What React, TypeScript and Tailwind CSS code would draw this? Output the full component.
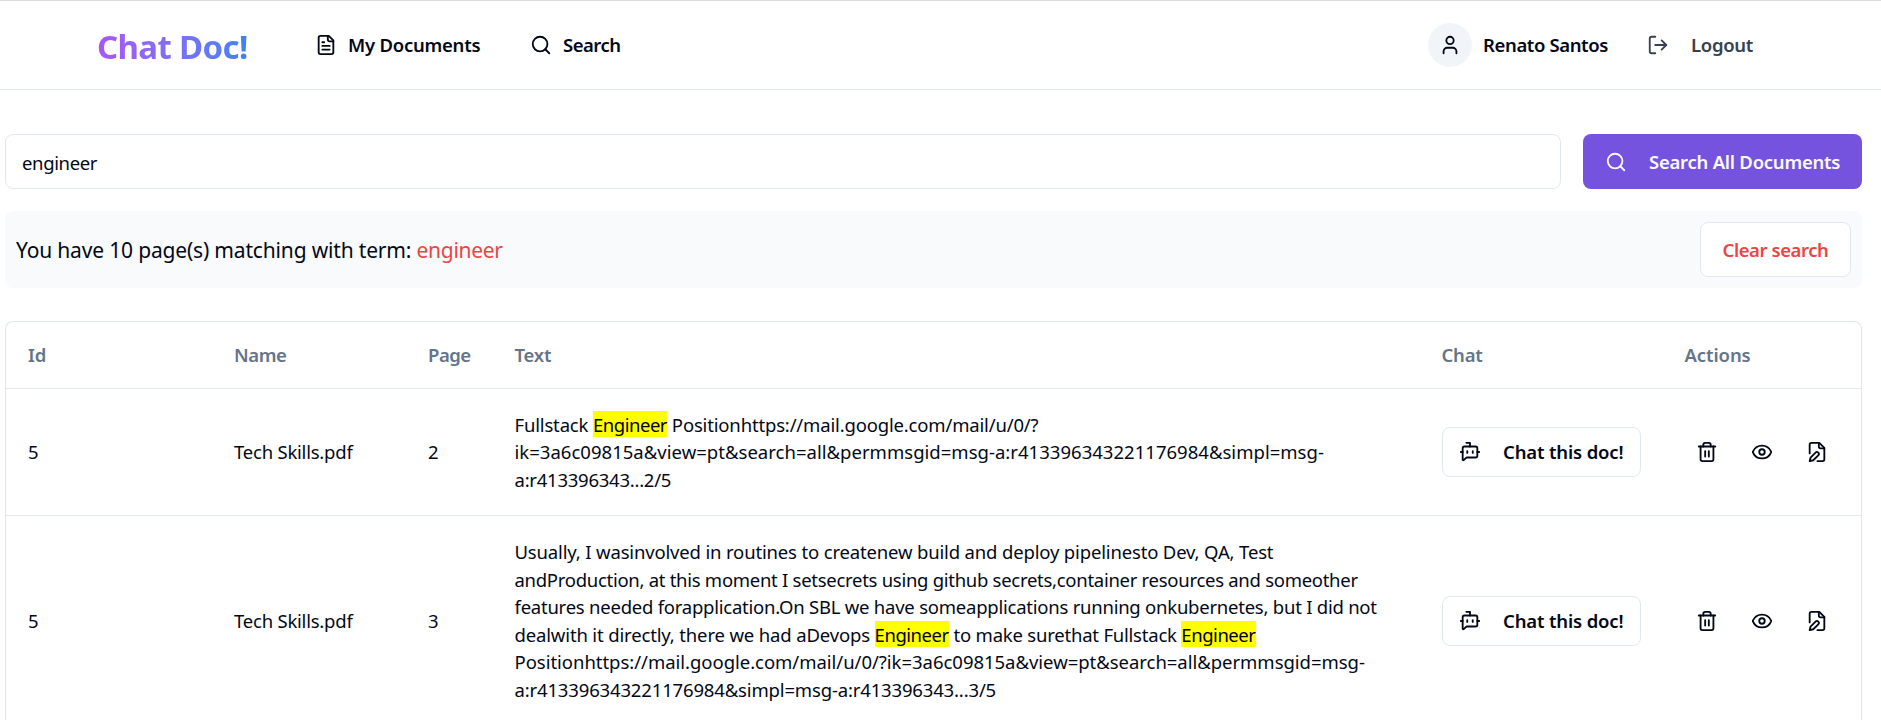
import type { ReactNode } from "react";
import { BotMessageSquare, Eye, LogOut, Search, Trash2, User } from "lucide-react";

const iconProps = {
  viewBox: "0 0 24 24",
  fill: "none",
  stroke: "currentColor",
  strokeWidth: 2,
  strokeLinecap: "round",
  strokeLinejoin: "round",
} as const;

function FileTextIcon() {
  return (
    <svg {...iconProps} className="size-[22px]">
      <path d="M15 2H6a2 2 0 0 0-2 2v16a2 2 0 0 0 2 2h12a2 2 0 0 0 2-2V7Z" />
      <path d="M14 2v4a2 2 0 0 0 2 2h4" />
      <path d="M16 13H8" />
      <path d="M16 17H8" />
      <path d="M10 9H8" />
    </svg>
  );
}

function FileEditIcon() {
  return (
    <svg {...iconProps} className="size-[22px]">
      <path d="M4 13.5V4a2 2 0 0 1 2-2h8.5L20 7.5V20a2 2 0 0 1-2 2h-5.5" />
      <path d="M14 2v4a2 2 0 0 0 2 2h4" />
      <path d="M10.42 12.61a2.1 2.1 0 1 1 2.97 2.97L7.95 21 4 22l.99-3.95 5.43-5.44Z" />
    </svg>
  );
}

function Mark() {
  return (
    <mark className="inline-block h-[26px] w-[74.3px] bg-[#ffff00] align-top leading-[27.5px] tracking-[-0.46px] text-black">
      Engineer
    </mark>
  );
}

type Row = { id: number; name: string; page: number; text: ReactNode };

const rows: Row[] = [
  {
    id: 5,
    name: "Tech Skills.pdf",
    page: 2,
    text: (
      <>
        <div className="tracking-[-0.165px]">
          Fullstack <Mark /> Positionhttps://mail.google.com/mail/u/0/?
        </div>
        <div className="tracking-[0.025px]">
          ik=3a6c09815a&amp;view=pt&amp;search=all&amp;permmsgid=msg-a:r413396343221176984&amp;simpl=msg-
        </div>
        <div className="tracking-[-0.25px]">a:r413396343...2/5</div>
      </>
    ),
  },
  {
    id: 5,
    name: "Tech Skills.pdf",
    page: 3,
    text: (
      <>
        <div className="tracking-[-0.16px]">
          Usually, I wasinvolved in routines to createnew build and deploy pipelinesto Dev, QA, Test
        </div>
        <div className="tracking-[-0.28px]">
          andProduction, at this moment I setsecrets using github secrets,container resources and someother
        </div>
        <div className="tracking-[-0.235px]">
          features needed forapplication.On SBL we have someapplications running onkubernetes, but I did not
        </div>
        <div className="tracking-[-0.15px]">
          dealwith it directly, there we had aDevops <Mark />
          <span className="tracking-[-0.21px]"> to make surethat Fullstack </span>
          <Mark />
        </div>
        <div className="tracking-[-0.027px]">
          Positionhttps://mail.google.com/mail/u/0/?ik=3a6c09815a&amp;view=pt&amp;search=all&amp;permmsgid=msg-
        </div>
        <div className="tracking-[-0.155px]">
          a:r413396343221176984&amp;simpl=msg-a:r413396343...3/5
        </div>
      </>
    ),
  },
];

const columns = "grid grid-cols-[206px_194px_86.5px_927px_243px_1fr] items-center pl-[22px]";

export default function App() {
  return (
    <div className="h-[720px] w-full overflow-hidden bg-white font-['Noto_Sans',sans-serif] text-[18.5px] leading-[27.5px] text-[#020817]">
      <header className="flex h-[90px] items-center border-t border-b border-t-[#dcdcdc] border-b-[#e2e8f0] pr-[128px] pl-[97px]">
        <h1 className="w-[151px] whitespace-nowrap bg-gradient-to-r from-[#a855f7] to-[#3b82f6] bg-clip-text pt-[4px] text-[33px] leading-[44px] font-bold tracking-[-0.65px] text-transparent">
          Chat Doc!
        </h1>
        <nav className="ml-[67px] flex items-center font-[560]">
          <a className="flex items-center gap-[11px]">
            <FileTextIcon />
            <span className="w-[182px] tracking-[-0.24px]">My Documents</span>
          </a>
          <a className="flex items-center gap-[11px]">
            <Search className="size-[22px]" />
            <span className="tracking-[-0.5px]">Search</span>
          </a>
        </nav>
        <div className="ml-auto flex items-center font-[560]">
          <div className="flex size-[44px] items-center justify-center rounded-full bg-[#f1f5f9]">
            <User className="size-[22px]" />
          </div>
          <span className="ml-[11px] w-[164px] tracking-[-0.38px]">Renato Santos</span>
          <LogOut className="size-[22px] text-[#374151]" />
          <span className="ml-[22px] w-[62px] tracking-[-0.3px] text-[#374151]">Logout</span>
        </div>
      </header>

      <main className="pt-[44px] pr-[19px] pl-[5px]">
        <div className="flex h-[55px] gap-[22px]">
          <div className="flex flex-1 items-center rounded-lg border border-[#e2e8f0] pt-[2px] pl-[16px] tracking-[-0.35px]">
            engineer
          </div>
          <button className="flex w-[279px] items-center rounded-lg bg-[#7653df] pl-[22px] font-[560] text-[#f8fafc]">
            <Search className="size-[22px]" />
            <span className="ml-[22px] tracking-[-0.25px] whitespace-nowrap">Search All Documents</span>
          </button>
        </div>

        <div className="mt-[22px] flex h-[77px] items-center justify-between rounded-lg bg-[#f8fafc] px-[11px]">
          <p className="pt-[2px] text-[21px] tracking-[-0.17px]">
            You have 10 page(s) matching with term:{" "}
            <span className="tracking-[-0.3px] text-[#ef4444]">engineer</span>
          </p>
          <button className="flex h-[55px] w-[151px] items-center justify-center rounded-lg border border-[#e2e8f0] bg-white font-[560] tracking-[-0.42px] text-[#ef4444]">
            Clear search
          </button>
        </div>

        <section className="mt-[33px] rounded-t-lg border border-b-0 border-[#e2e8f0]">
          <div className={`${columns} h-[67px] border-b border-[#e2e8f0] font-[560] text-[#64748b]`}>
            <span className="tracking-[-0.2px]">Id</span>
            <span className="tracking-[-0.4px]">Name</span>
            <span className="tracking-[-0.5px]">Page</span>
            <span className="tracking-[-0.2px]">Text</span>
            <span className="tracking-[-0.2px]">Chat</span>
            <span className="tracking-[-0.1px]">Actions</span>
          </div>
          {rows.map((row) => (
            <div key={row.page} className={`${columns} border-b border-[#e2e8f0] pt-[21.85px] pb-[22.05px]`}>
              <span>{row.id}</span>
              <span className="tracking-[-0.22px]">{row.name}</span>
              <span>{row.page}</span>
              <div className="whitespace-nowrap">{row.text}</div>
              <button className="flex h-[50px] w-[199px] items-center rounded-lg border border-[#e2e8f0] pl-[16px] font-[560]">
                <BotMessageSquare className="size-[22px]" />
                <span className="ml-[22.5px] tracking-[-0.16px]">Chat this doc!</span>
              </button>
              <div className="flex gap-[33px] pl-[11px]">
                <Trash2 className="size-[22px]" />
                <Eye className="size-[22px]" />
                <FileEditIcon />
              </div>
            </div>
          ))}
        </section>
      </main>
    </div>
  );
}
